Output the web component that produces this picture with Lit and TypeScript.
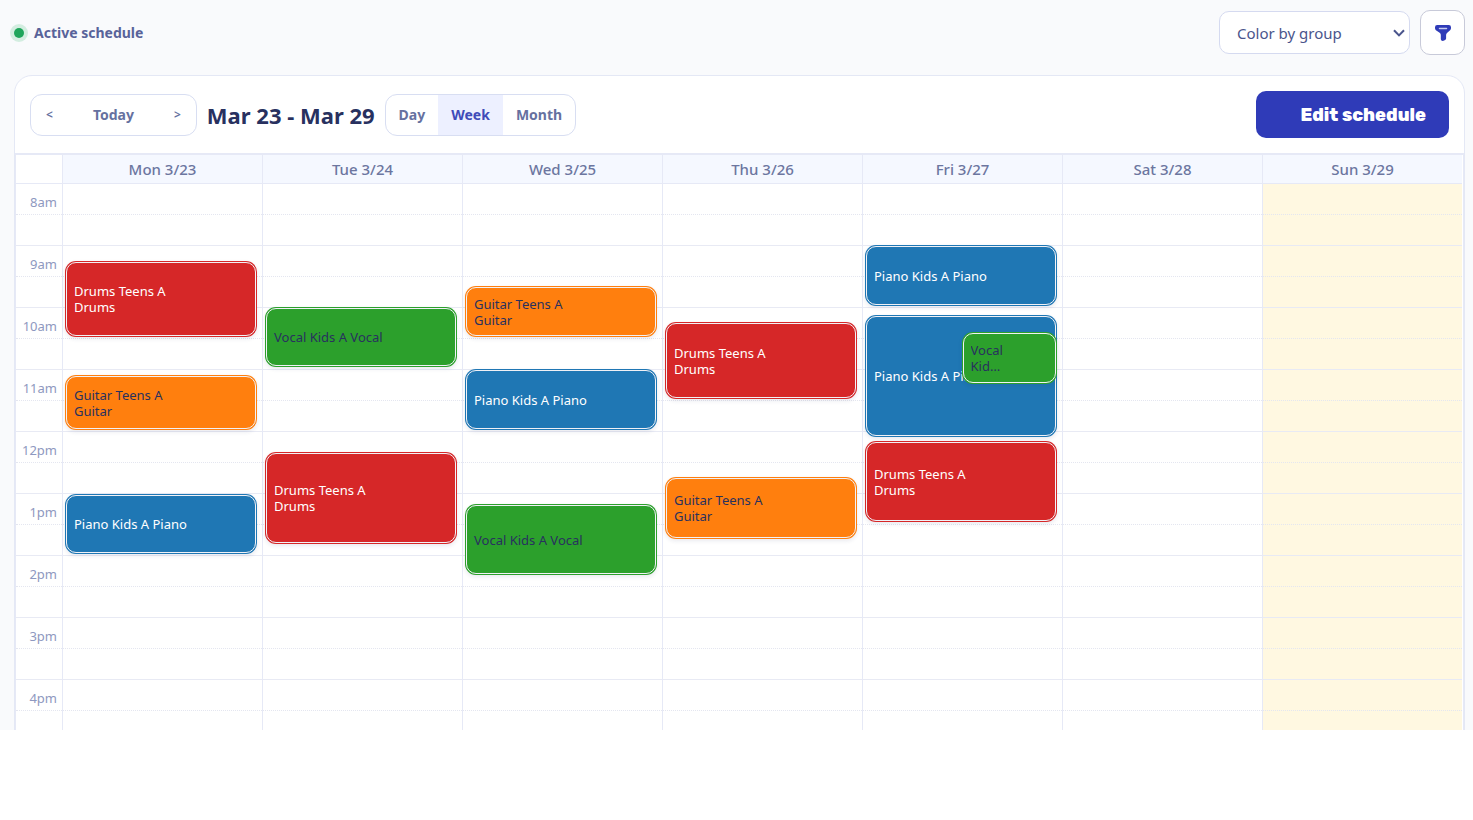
import { LitElement, html, css } from "lit";
import { customElement, state } from "lit/decorators.js";

interface Lesson {
  title: string;
  subject: "drums" | "guitar" | "piano" | "vocal";
  start: number;
  length: number;
  nested?: boolean;
}

interface Day {
  label: string;
  today?: boolean;
  lessons: Lesson[];
}

const HOUR = 62;
const px = (minutes: number) => Math.round((minutes * HOUR) / 60);

const drums = (start: number, length: number): Lesson => ({ title: "Drums Teens A Drums", subject: "drums", start, length });
const guitar = (start: number, length: number): Lesson => ({ title: "Guitar Teens A Guitar", subject: "guitar", start, length });
const piano = (start: number, length: number): Lesson => ({ title: "Piano Kids A Piano", subject: "piano", start, length });
const vocal = (start: number, length: number, nested = false): Lesson => ({ title: "Vocal Kids A Vocal", subject: "vocal", start, length, nested });

// Minutes are counted from 8am.
const days: Day[] = [
  { label: "Mon 3/23", lessons: [drums(75, 72), guitar(186, 51), piano(301, 56)] },
  { label: "Tue 3/24", lessons: [vocal(120, 56), drums(260, 87)] },
  { label: "Wed 3/25", lessons: [guitar(100, 47), piano(180, 57), vocal(311, 67)] },
  { label: "Thu 3/26", lessons: [drums(134.5, 73), guitar(284.5, 58)] },
  { label: "Fri 3/27", lessons: [piano(60, 57), piano(128, 116), drums(250, 76), vocal(144, 48, true)] },
  { label: "Sat 3/28", lessons: [] },
  { label: "Sun 3/29", today: true, lessons: [] },
];

const hours = ["8am", "9am", "10am", "11am", "12pm", "1pm", "2pm", "3pm", "4pm"];

@customElement("app-root")
export class AppRoot extends LitElement {
  @state() private view = "Week";

  static styles = css`
    :host {
      display: block;
      font-family: "Segoe UI", "Noto Sans", "Open Sans", sans-serif;
      font-size: 14px;
      color: #5f6b9b;
    }
    *, *::before { box-sizing: border-box; }
    button, select { font: inherit; color: inherit; margin: 0; cursor: pointer; }
    .page { background: #f9fafc; height: calc(100vh - 90px); min-height: 400px; overflow: hidden; }
    .topbar { display: flex; align-items: center; justify-content: space-between; padding: 10px 8px 20px 14px; }
    .status { display: flex; align-items: center; gap: 10px; font-weight: 700; color: #58639a; }
    .dot { width: 10px; height: 10px; border-radius: 50%; background: #1fa55b; box-shadow: 0 0 0 4px #d3ede0; }
    .tools { display: flex; align-items: center; gap: 10px; }
    .picker { position: relative; display: flex; }
    .picker select {
      appearance: none; width: 191px; height: 43px; padding: 0 32px 0 17px;
      border: 1px solid #d5daf0; border-radius: 10px; background: #fff; color: #4a558c; font-size: 15px;
    }
    .chevron { position: absolute; right: 4px; top: 15px; width: 14px; height: 14px; pointer-events: none; }
    .filter {
      width: 45px; height: 45px; padding: 0; display: grid; place-items: center;
      border: 1px solid #c8cad9; border-radius: 10px; background: #fff;
    }
    .filter svg { width: 18px; height: 18px; }
    .card { margin: 0 8px 0 14px; background: #fff; border: 1px solid #e4e8f5; border-radius: 18px 18px 0 0; }
    .toolbar { display: flex; align-items: center; gap: 10px; padding: 15px; }
    .group { display: flex; height: 42px; border: 1px solid #d8def2; border-radius: 12px; overflow: hidden; background: #fff; }
    .group button { border: 0; background: none; padding: 0 13px; font-weight: 700; color: #66719f; }
    .nav button { padding: 0 15px; font-size: 12px; font-weight: 600; }
    .nav .today { padding: 0 25px; font-size: 14px; font-weight: 700; }
    .group .selected { background: #edf0ff; color: #404bb9; }
    .range { margin: 0; font-size: 22px; line-height: 30px; font-weight: 700; color: #28315f; }
    .edit {
      margin-left: auto; height: 47px; padding: 0 23px 0 44px; border: 0; border-radius: 10px;
      background: #2f3bb8; color: #fff; font-family: Rubik, Inter, sans-serif; font-size: 18px; font-weight: 800;
    }
    .calendar {
      display: grid; grid-template-columns: 46px repeat(7, minmax(0, 1fr));
      border: solid #e6e9f6; border-width: 2px 1px 0; padding-right: 1px;
    }
    .head { height: 29px; display: grid; place-items: center; background: #f5f8ff; border-bottom: 1px solid #e6e9f6; border-left: 1px solid #e6e9f6; font-size: 15px; font-weight: 500; color: #6c769f; }
    .corner { background: #fff; border-left: 0; }
    .column { position: relative; border-left: 1px solid #e6e9f6; }
    .axis { border-left: 0; }
    .now { background: #fff8e1; }
    .slot { height: 62px; border-bottom: 1px solid #e8eaf4; font-size: 13px; line-height: 18px; color: #8e98c0; }
    .slot::before { content: ""; display: block; height: 31px; border-bottom: 1px dotted #e4e6f0; }
    .axis .slot { display: grid; grid-template: 31px / 1fr; }
    .axis .slot::before, .axis .slot span { grid-area: 1 / 1; }
    .axis .slot span { text-align: right; padding: 9px 5px 0 0; }
    .lesson {
      position: absolute; left: 3px; right: 6px; display: flex; align-items: center; overflow: hidden;
      padding: 0 7px; border: 1px solid #f0f1f6; border-radius: 10px; font-size: 13px; line-height: 16px;
      background: var(--tone); box-shadow: 0 0 0 1px var(--tone), 0 2px 4px 1px #28315f1a;
    }
    .lesson span { max-width: 116px; }
    .nested { left: 50%; }
    .nested span { max-width: 35px; display: -webkit-box; -webkit-box-orient: vertical; -webkit-line-clamp: 2; overflow: hidden; }
    .drums { --tone: #d62728; color: #fff; }
    .piano { --tone: #1f77b4; color: #fff; }
    .guitar { --tone: #ff7f0e; color: #28315f; }
    .vocal { --tone: #2ca02c; color: #28315f; }
  `;

  private lesson(l: Lesson) {
    return html`<div class="lesson ${l.subject} ${l.nested ? "nested" : ""}"
      style="top:${px(l.start)}px;height:${px(l.length)}px"><span>${l.title}</span></div>`;
  }

  render() {
    return html`
      <main class="page">
        <header class="topbar">
          <div class="status"><i class="dot"></i>Active schedule</div>
          <div class="tools">
            <div class="picker">
              <select aria-label="Event color"><option>Color by group</option></select>
              <svg class="chevron" viewBox="0 0 14 14" fill="none" stroke="#4a558c" stroke-width="2"><path d="M2 4.2 7 9.4 12 4.2" /></svg>
            </div>
            <button class="filter" aria-label="Filter">
              <svg viewBox="0 0 18 18"><path fill="#2f3bb8" d="M3.200 1h11.600Q17 1 17 3.200v1q0 1.200-.9 2.100L13 9q-.9.800-.9 2v3.400q0 .8-.7 1.300l-1.200.9Q9.500 17 8.700 17 7 17 6.800 15.200V11q0-1.200-.8-2L1.900 6.300Q1 5.400 1 4.200v-1Q1 1 3.200 1Z" /><path d="M5.500 4.500h7" stroke="#c8ccf0" stroke-width="1.500" stroke-linecap="round" /></svg>
            </button>
          </div>
        </header>
        <section class="card">
          <div class="toolbar">
            <div class="group nav">
              <button aria-label="Previous week">&lt;</button>
              <button class="today">Today</button>
              <button aria-label="Next week">&gt;</button>
            </div>
            <h1 class="range">Mar 23 - Mar 29</h1>
            <div class="group">
              ${["Day", "Week", "Month"].map((v) => html`<button class=${v === this.view ? "selected" : ""} @click=${() => (this.view = v)}>${v}</button>`)}
            </div>
            <button class="edit">Edit schedule</button>
          </div>
          <div class="calendar">
            <div class="head corner"></div>
            ${days.map((d) => html`<div class="head">${d.label}</div>`)}
            <div class="column axis">${hours.map((h) => html`<div class="slot"><span>${h}</span></div>`)}</div>
            ${days.map((d) => html`<div class="column ${d.today ? "now" : ""}">
              ${hours.map(() => html`<div class="slot"></div>`)}
              ${d.lessons.map((l) => this.lesson(l))}
            </div>`)}
          </div>
        </section>
      </main>
    `;
  }
}
